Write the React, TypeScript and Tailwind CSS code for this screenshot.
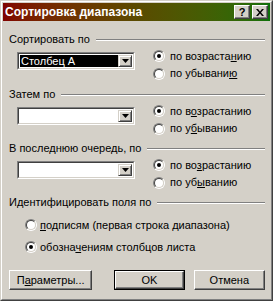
import { ReactNode } from 'react'

const font = "font-['Liberation_Sans','Arial',sans-serif]"

const Radio = ({ checked }: { checked?: boolean }) => (
    <span className="flex h-[12px] w-[12px] shrink-0 rounded-full border border-t-[#808080] border-l-[#808080] border-r-white border-b-white">
        <span className="flex flex-1 items-center justify-center rounded-full border border-t-[#404040] border-l-[#404040] border-r-[#d4d0c8] border-b-[#d4d0c8] bg-white">
            {checked && <span className="h-[4px] w-[4px] rounded-full bg-black" />}
        </span>
    </span>
)

const RadioRow = ({ checked, children, className = '' }: { checked?: boolean; children: ReactNode; className?: string }) => (
    <div className={`flex items-center gap-[5px] ${className}`}>
        <Radio checked={checked} />
        <span className="leading-none">{children}</span>
    </div>
)

const GroupLabel = ({ children }: { children: ReactNode }) => (
    <div className="flex h-[13px] items-center gap-[6px]">
        <span className="whitespace-nowrap leading-none">{children}</span>
        <div className="flex-1 border-t border-b border-t-[#808080] border-b-white" />
    </div>
)

const Combo = ({ value }: { value?: string }) => (
    <div className="flex h-[18px] w-[118px] border border-t-[#808080] border-l-[#808080] border-r-white border-b-white">
        <div className="flex flex-1 border border-t-[#404040] border-l-[#404040] border-r-[#d4d0c8] border-b-[#d4d0c8] bg-white p-[1px]">
            <div className={`flex flex-1 items-center pl-[1px] leading-none ${value ? 'bg-black text-white' : ''}`}>
                {value}
            </div>
            <div className="flex w-[14px] items-center justify-center border border-t-[#d4d0c8] border-l-[#d4d0c8] border-r-[#404040] border-b-[#404040] bg-[#d4d0c8] shadow-[inset_1px_1px_0_#fff,inset_-1px_-1px_0_#808080]">
                <svg width="7" height="4" viewBox="0 0 7 4">
                    <path d="M0 0h7L3.5 4z" fill="#000" />
                </svg>
            </div>
        </div>
    </div>
)

const SortGroup = ({
    label,
    value,
    asc,
    desc,
    className = '',
}: {
    label: string
    value?: string
    asc: ReactNode
    desc: ReactNode
    className?: string
}) => (
    <div className={`flex flex-col ${className}`}>
        <GroupLabel>{label}</GroupLabel>
        <div className="flex">
            <div className="ml-[8px] mt-[6px]">
                <Combo value={value} />
            </div>
            <div className="ml-[18px] flex flex-col pt-[1px]">
                <RadioRow checked className="h-[18px]">{asc}</RadioRow>
                <RadioRow className="h-[17px]">{desc}</RadioRow>
            </div>
        </div>
    </div>
)

const Button = ({ children, def, className = '' }: { children: ReactNode; def?: boolean; className?: string }) => (
    <div className={`flex h-[20px] ${def ? 'border border-black' : ''} ${className}`}>
        <div className="flex flex-1 items-center justify-center border border-t-white border-l-white border-r-[#404040] border-b-[#404040] bg-[#d4d0c8] shadow-[inset_-1px_-1px_0_#808080] leading-none">
            {children}
        </div>
    </div>
)

const App = () => (
    <div className={`${font} h-[301px] w-[273px] border border-t-[#d4d0c8] border-l-[#d4d0c8] border-r-[#404040] border-b-[#404040] text-[11px] text-black`}>
        <div className="flex h-full flex-col border border-t-white border-l-white border-r-[#808080] border-b-[#808080] bg-[#d4d0c8] p-[1px]">
            <div className="flex h-[18px] items-center bg-gradient-to-r from-[#800000] via-[#5a4a00] to-[#0a700a] pl-[2px] pr-[2px]">
                <span className="flex-1 text-[12px] font-bold leading-none text-white">Сортировка диапазона</span>
                <div className="flex gap-[2px]">
                    <Button className="w-[16px] !h-[14px]">
                        <span className="text-[11px] font-bold">?</span>
                    </Button>
                    <Button className="w-[16px] !h-[14px]">
                        <svg width="8" height="7" viewBox="0 0 8 7">
                            <path d="M0 0h2l2 2.5L6 0h2L5 3.5 8 7H6L4 4.5 2 7H0l3-3.5z" fill="#000" />
                        </svg>
                    </Button>
                </div>
            </div>
            <div className="flex flex-1 flex-col pl-[6px] pr-[5px] pt-[12px]">
                <SortGroup
                    label="Сортировать по"
                    value="Столбец А"
                    className="h-[55px]"
                    asc={<>по возраста<u>н</u>ию</>}
                    desc={<>по убывани<u>ю</u></>}
                />
                <SortGroup
                    label="Затем по"
                    className="h-[54px]"
                    asc={<>по в<u>о</u>зрастанию</>}
                    desc={<>по у<u>б</u>ыванию</>}
                />
                <SortGroup
                    label="В последнюю очередь, по"
                    className="h-[54px]"
                    asc={<>по во<u>з</u>растанию</>}
                    desc={<>по уб<u>ы</u>ванию</>}
                />
                <div className="flex flex-col">
                    <GroupLabel>Идентифицировать поля по</GroupLabel>
                    <div className="ml-[16px] mt-[6px] flex flex-col">
                        <RadioRow className="h-[20px] !gap-[3px]">
                            <><u>п</u>одписям (первая строка диапазона)</>
                        </RadioRow>
                        <RadioRow checked className="mt-[2px] h-[20px] !gap-[3px]">
                            <>обозна<u>ч</u>ениям столбцов листа</>
                        </RadioRow>
                    </div>
                </div>
                <div className="mt-auto mb-[8px] flex">
                    <Button className="w-[84px]">
                        <span>П<u>а</u>раметры...</span>
                    </Button>
                    <Button def className="ml-[22px] w-[71px]">
                        OK
                    </Button>
                    <Button className="ml-[9px] w-[72px]">Отмена</Button>
                </div>
            </div>
        </div>
    </div>
)

export default App
